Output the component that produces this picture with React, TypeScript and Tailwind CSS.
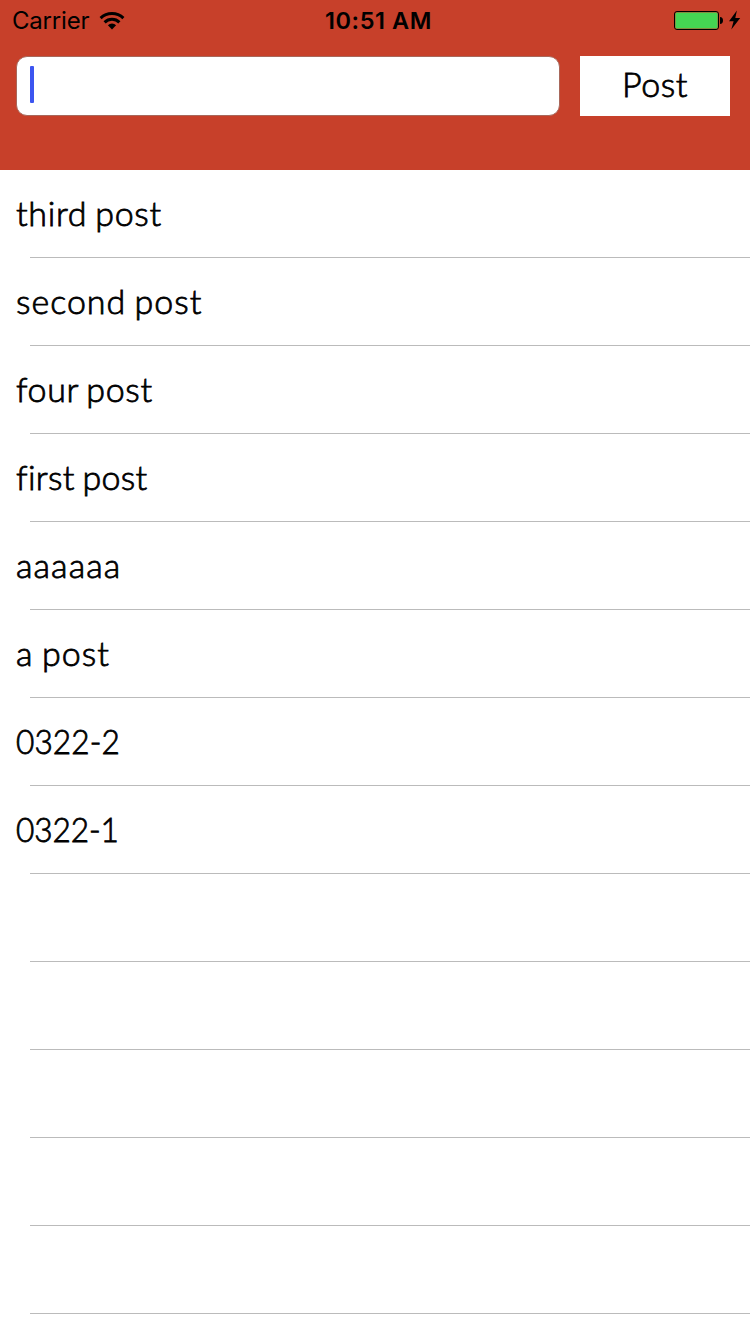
import React from "react";

type Post = { text: string; style: string };

const posts: Post[] = [
  { text: "third post", style: "tracking-[0.7px]" },
  { text: "second post", style: "tracking-[1px]" },
  { text: "four post", style: "tracking-[0.65px]" },
  { text: "first post", style: "tracking-[0.35px]" },
  { text: "aaaaaa", style: "tracking-[1.1px]" },
  { text: "a post", style: "tracking-[1.1px]" },
  { text: "0322-2", style: "inline-block origin-left scale-x-93 tracking-[0.1px]" },
  { text: "0322-1", style: "inline-block origin-left scale-x-93 tracking-[-0.1px]" },
  { text: "", style: "" },
  { text: "", style: "" },
  { text: "", style: "" },
  { text: "", style: "" },
  { text: "", style: "" },
];

function WifiIcon() {
  return (
    <svg width="26" height="20" viewBox="0 0 26 20" fill="none" stroke="#000" strokeWidth="3">
      <path d="M1.6 7.1 A16.4 16.4 0 0 1 24.4 7.1" />
      <path d="M5.6 11.4 A10.5 10.5 0 0 1 20.4 11.4" />
      <path d="M13 18.4 L8.9 14.3 A5.8 5.8 0 0 1 17.1 14.3 Z" fill="#000" stroke="none" />
    </svg>
  );
}

function BatteryIcon() {
  return (
    <svg width="68" height="22" viewBox="0 0 68 22">
      <rect x="1.5" y="1.5" width="44" height="18" rx="2.5" fill="#c7402a" stroke="#000" />
      <rect x="2.4" y="2.4" width="42.200" height="16.200" rx="1.5" fill="#45d553" />
      <path d="M47 7 Q50 7.4 50 10.5 Q50 13.6 47 14 Z" fill="#000" />
      <path d="M63.9 0.5 L56 11.2 H60.6 L58.3 19.6 L67.2 8.1 H62.3 Z" fill="#000" />
    </svg>
  );
}

function StatusBar() {
  return (
    <div className="grid h-10 grid-cols-3 items-center pt-0.5 font-[Inter,sans-serif] font-normal text-black">
      <div className="flex items-center pl-3">
        <span className="text-[24px] leading-[38px] tracking-[-0.2px]">Carrier</span>
        <span className="ml-[10px]"><WifiIcon /></span>
      </div>
      <div className="pl-[7px] text-center text-[23.5px] leading-[38px] font-semibold tracking-[0.6px]">10:51 AM</div>
      <div className="flex justify-end pr-[9px]"><BatteryIcon /></div>
    </div>
  );
}

export default function App() {
  return (
    <main className="h-[1334px] w-[750px] overflow-hidden bg-white font-[Lato,sans-serif] text-[34px] font-light text-black [font-variant-ligatures:none]">
      <header className="h-[170px] bg-[#c7402a]">
        <StatusBar />
        <div className="flex pt-4 pr-5 pl-4">
          <div className="flex h-[60px] w-[544px] items-center rounded-[11px] border border-[#a8685b] bg-white pl-[13px]">
            <span className="mb-[3px] h-[37px] w-1 rounded-[1px] bg-[#3c55f0]" />
          </div>
          <button className="ml-5 h-[60px] w-[150px] bg-white pb-1 leading-[56px] tracking-[0.6px] [-webkit-text-stroke:0.8px_#000]">Post</button>
        </div>
      </header>
      <ul className="[-webkit-text-stroke:0.8px_#000]">
        {posts.map((post, i) => (
          <li key={i} className="flex h-[88px] flex-col">
            <div className="h-[87px] pl-4 leading-[85px] [word-spacing:-2px]">
              <span className={post.style}>{post.text}</span>
            </div>
            <div className="ml-[30px] h-px bg-[#bbbbbb]" />
          </li>
        ))}
      </ul>
    </main>
  );
}
